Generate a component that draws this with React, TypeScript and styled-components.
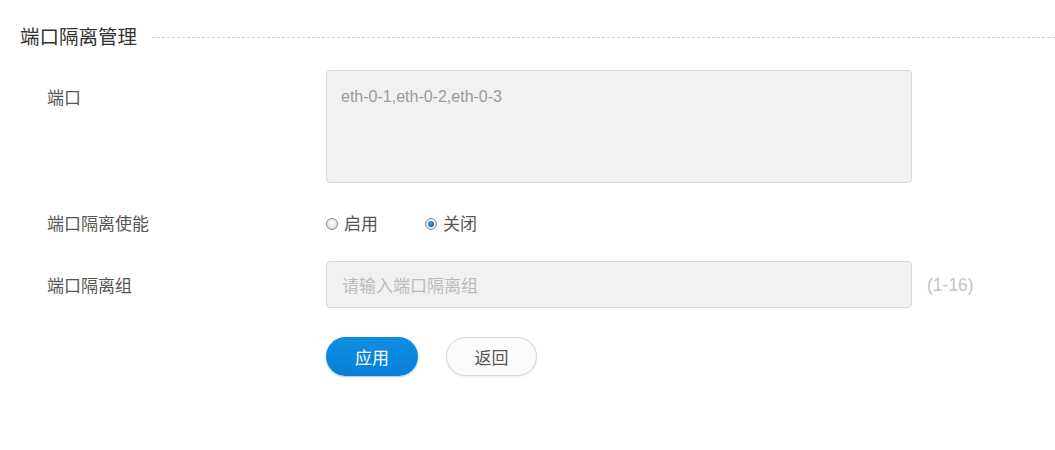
import React from 'react';
import styled, { createGlobalStyle } from 'styled-components';

const GlobalStyle = createGlobalStyle`
  body {
    margin: 0;
    background: #fff;
    font-family: 'Noto Sans', 'Noto Sans CJK SC', sans-serif;
    color: #555;
  }
`;

const Page = styled.div`
  width: 1055px;
  height: 450px;
  padding-top: 24px;
  box-sizing: border-box;
`;

const TitleBar = styled.div`
  display: flex;
  align-items: center;
  padding-left: 20px;
  height: 26px;
`;

const Title = styled.h2`
  margin: 0;
  font-size: 19.5px;
  font-weight: normal;
  color: #333;
  line-height: 26px;
  white-space: nowrap;
`;

const TitleRule = styled.div`
  flex: 1;
  margin-left: 15px;
  border-top: 1px dashed #d4d4d4;
`;

const Form = styled.div`
  display: flex;
  flex-direction: column;
  padding-left: 47px;
  margin-top: 20px;
`;

const Row = styled.div<{ $align?: string; $mt?: number }>`
  display: flex;
  align-items: ${(p) => p.$align || 'center'};
  margin-top: ${(p) => p.$mt || 0}px;
`;

const Label = styled.div<{ $pt?: number }>`
  width: 279px;
  flex-shrink: 0;
  font-size: 17px;
  color: #555;
  padding-top: ${(p) => p.$pt || 0}px;
`;

const TextArea = styled.div`
  width: 586px;
  height: 113px;
  box-sizing: border-box;
  background: #f1f1f1;
  border: 1px solid #d9d9d9;
  border-radius: 4px;
  padding: 14px 14px;
  font-family: 'Liberation Sans', 'Noto Sans CJK SC', sans-serif;
  font-size: 16px;
  color: #9a9a9a;
  line-height: 24px;
`;

const RadioGroup = styled.div`
  display: flex;
  align-items: center;
  height: 24px;
`;

const RadioOption = styled.label`
  display: flex;
  align-items: center;
  width: 99px;
  font-size: 17px;
  color: #555;
  gap: 6px;
`;

const RadioDot = styled.span<{ $on?: boolean }>`
  width: 12px;
  height: 12px;
  box-sizing: border-box;
  border-radius: 50%;
  border: 1px solid #8c8c8c;
  background: radial-gradient(circle at 50% 35%, #fff 0%, #dcdcdc 85%);
  display: flex;
  align-items: center;
  justify-content: center;
  margin-top: 3px;

  &::after {
    content: '';
    display: ${(p) => (p.$on ? 'block' : 'none')};
    width: 6px;
    height: 6px;
    border-radius: 50%;
    background: radial-gradient(circle at 40% 35%, #4aa4e8 0%, #0b4f8c 90%);
  }
`;

const Input = styled.div`
  width: 586px;
  height: 47px;
  box-sizing: border-box;
  background: #f1f1f1;
  border: 1px solid #d9d9d9;
  border-radius: 4px;
  padding: 0 15px;
  display: flex;
  align-items: center;
  font-size: 17px;
  color: #bbb;
`;

const Hint = styled.span`
  margin-left: 15px;
  font-family: 'Liberation Sans', sans-serif;
  font-size: 17.5px;
  color: #c4c4c4;
  padding-top: 2px;
`;

const Buttons = styled.div`
  display: flex;
  gap: 28px;
  margin-left: 279px;
`;

const Button = styled.button<{ $primary?: boolean }>`
  width: ${(p) => (p.$primary ? 92 : 91)}px;
  height: 39px;
  border-radius: 20px;
  font-family: 'Noto Sans', 'Noto Sans CJK SC', sans-serif;
  font-size: 17px;
  cursor: pointer;
  padding: 0;
  ${(p) =>
    p.$primary
      ? `
    border: none;
    color: #fff;
    background: linear-gradient(#0f8fe4, #0680d6);
    box-shadow: 0 1px 2px rgba(0, 80, 150, 0.35);
  `
      : `
    border: 1px solid #d6d6d6;
    color: #555;
    background: #fbfbfb;
    box-shadow: 0 1px 2px rgba(0, 0, 0, 0.08);
  `}
`;

export default function App() {
  return (
    <Page>
      <GlobalStyle />
      <TitleBar>
        <Title>端口隔离管理</Title>
        <TitleRule />
      </TitleBar>
      <Form>
        <Row $align="flex-start">
          <Label $pt={14}>端口</Label>
          <TextArea>eth-0-1,eth-0-2,eth-0-3</TextArea>
        </Row>
        <Row $mt={27}>
          <Label>端口隔离使能</Label>
          <RadioGroup>
            <RadioOption>
              <RadioDot />
              启用
            </RadioOption>
            <RadioOption>
              <RadioDot $on />
              关闭
            </RadioOption>
          </RadioGroup>
        </Row>
        <Row $mt={26}>
          <Label>端口隔离组</Label>
          <Input>请输入端口隔离组</Input>
          <Hint>(1-16)</Hint>
        </Row>
        <Row $mt={29}>
          <Buttons>
            <Button $primary>应用</Button>
            <Button>返回</Button>
          </Buttons>
        </Row>
      </Form>
    </Page>
  );
}
